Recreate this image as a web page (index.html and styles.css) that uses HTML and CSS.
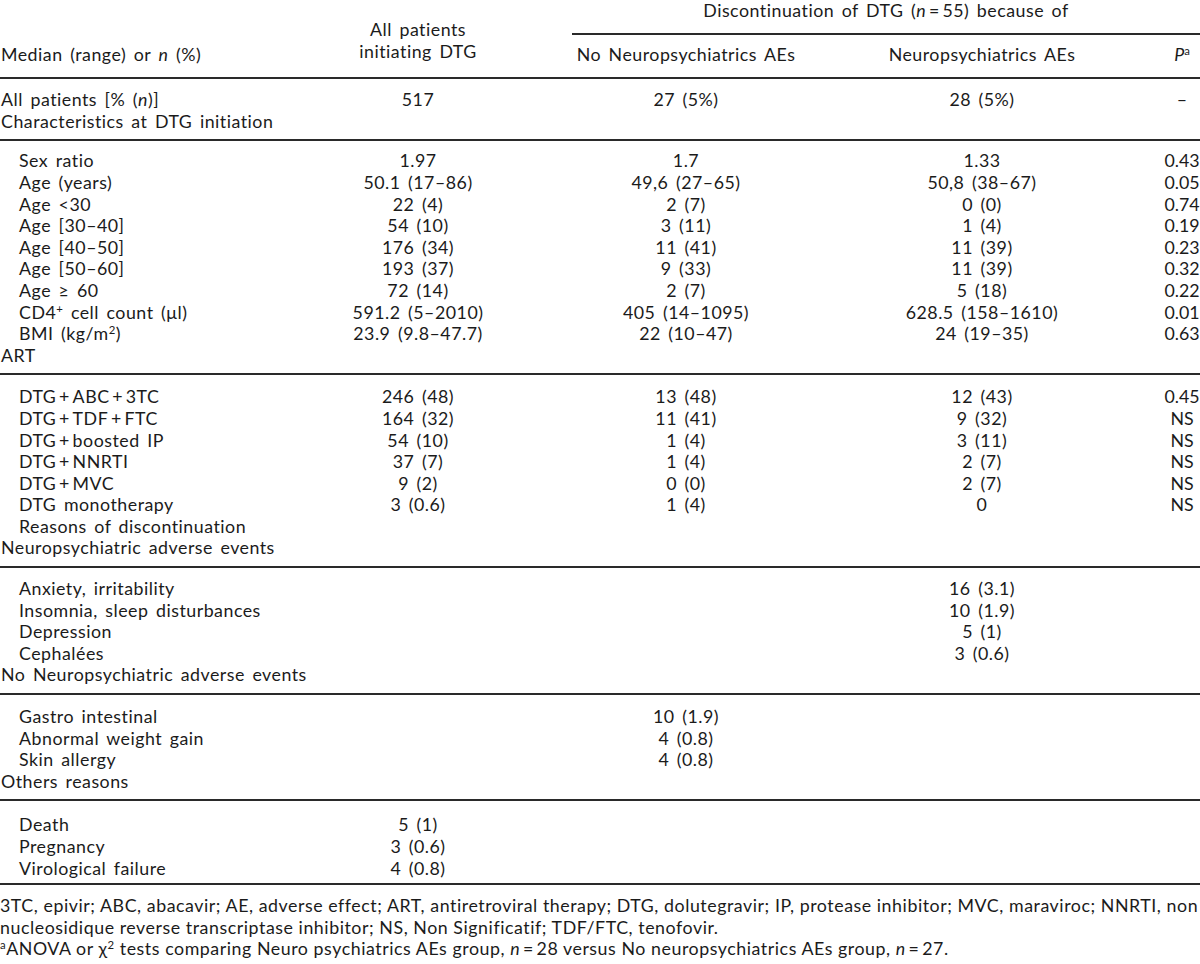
FILE: index.html
```html
<!DOCTYPE html>
<html lang="en">
<head>
<meta charset="utf-8">
<title>Discontinuation of DTG</title>
<link rel="stylesheet" href="styles.css">
</head>
<body>
<table class="t">
  <colgroup>
    <col class="w1"><col class="w2"><col class="w3"><col class="w4"><col class="w5">
  </colgroup>
  <thead>
    <tr>
      <th rowspan="2" class="hl">Median (range) or <i>n</i> (%)</th>
      <th rowspan="2" class="hm">All patients<br>initiating DTG</th>
      <th colspan="3" class="hs">Discontinuation of DTG (<i>n</i>&#8201;=&#8201;55) because of</th>
    </tr>
    <tr>
      <th class="hc">No Neuropsychiatrics AEs</th>
      <th class="hc">Neuropsychiatrics AEs</th>
      <th class="hc pc"><i>P</i><sup>a</sup></th>
    </tr>
  </thead>
  <tbody class="g g1">
    <tr><td>All patients [% (<i>n</i>)]</td><td>517</td><td>27 (5%)</td><td>28 (5%)</td><td>–</td></tr>
    <tr class="sec"><td colspan="5">Characteristics at DTG initiation</td></tr>
  </tbody>
  <tbody class="g g2">
    <tr><td class="in">Sex ratio</td><td>1.97</td><td>1.7</td><td>1.33</td><td>0.43</td></tr>
    <tr><td class="in">Age (years)</td><td>50.1 (17–86)</td><td>49,6 (27–65)</td><td>50,8 (38–67)</td><td>0.05</td></tr>
    <tr><td class="in">Age &lt;30</td><td>22 (4)</td><td>2 (7)</td><td>0 (0)</td><td>0.74</td></tr>
    <tr><td class="in">Age [30–40]</td><td>54 (10)</td><td>3 (11)</td><td>1 (4)</td><td>0.19</td></tr>
    <tr><td class="in">Age [40–50]</td><td>176 (34)</td><td>11 (41)</td><td>11 (39)</td><td>0.23</td></tr>
    <tr><td class="in">Age [50–60]</td><td>193 (37)</td><td>9 (33)</td><td>11 (39)</td><td>0.32</td></tr>
    <tr><td class="in">Age ≥ 60</td><td>72 (14)</td><td>2 (7)</td><td>5 (18)</td><td>0.22</td></tr>
    <tr><td class="in">CD4<sup>+</sup> cell count (μl)</td><td>591.2 (5–2010)</td><td>405 (14–1095)</td><td>628.5 (158–1610)</td><td>0.01</td></tr>
    <tr><td class="in">BMI (kg/m<sup>2</sup>)</td><td>23.9 (9.8–47.7)</td><td>22 (10–47)</td><td>24 (19–35)</td><td>0.63</td></tr>
    <tr class="sec"><td colspan="5">ART</td></tr>
  </tbody>
  <tbody class="g g3">
    <tr><td class="in">DTG&#8201;+&#8201;ABC&#8201;+&#8201;3TC</td><td>246 (48)</td><td>13 (48)</td><td>12 (43)</td><td>0.45</td></tr>
    <tr><td class="in">DTG&#8201;+&#8201;TDF&#8201;+&#8201;FTC</td><td>164 (32)</td><td>11 (41)</td><td>9 (32)</td><td>NS</td></tr>
    <tr><td class="in">DTG&#8201;+&#8201;boosted IP</td><td>54 (10)</td><td>1 (4)</td><td>3 (11)</td><td>NS</td></tr>
    <tr><td class="in">DTG&#8201;+&#8201;NNRTI</td><td>37 (7)</td><td>1 (4)</td><td>2 (7)</td><td>NS</td></tr>
    <tr><td class="in">DTG&#8201;+&#8201;MVC</td><td>9 (2)</td><td>0 (0)</td><td>2 (7)</td><td>NS</td></tr>
    <tr><td class="in">DTG monotherapy</td><td>3 (0.6)</td><td>1 (4)</td><td>0</td><td>NS</td></tr>
    <tr><td class="in" colspan="5">Reasons of discontinuation</td></tr>
    <tr class="sec"><td colspan="5">Neuropsychiatric adverse events</td></tr>
  </tbody>
  <tbody class="g g4">
    <tr><td class="in">Anxiety, irritability</td><td></td><td></td><td>16 (3.1)</td><td></td></tr>
    <tr><td class="in">Insomnia, sleep disturbances</td><td></td><td></td><td>10 (1.9)</td><td></td></tr>
    <tr><td class="in">Depression</td><td></td><td></td><td>5 (1)</td><td></td></tr>
    <tr><td class="in">Cephalées</td><td></td><td></td><td>3 (0.6)</td><td></td></tr>
    <tr class="sec"><td colspan="5">No Neuropsychiatric adverse events</td></tr>
  </tbody>
  <tbody class="g g5">
    <tr><td class="in">Gastro intestinal</td><td></td><td>10 (1.9)</td><td></td><td></td></tr>
    <tr><td class="in">Abnormal weight gain</td><td></td><td>4 (0.8)</td><td></td><td></td></tr>
    <tr><td class="in">Skin allergy</td><td></td><td>4 (0.8)</td><td></td><td></td></tr>
    <tr class="sec"><td colspan="5">Others reasons</td></tr>
  </tbody>
  <tbody class="g g6">
    <tr><td class="in">Death</td><td>5 (1)</td><td></td><td></td><td></td></tr>
    <tr><td class="in">Pregnancy</td><td>3 (0.6)</td><td></td><td></td><td></td></tr>
    <tr><td class="in">Virological failure</td><td>4 (0.8)</td><td></td><td></td><td></td></tr>
  </tbody>
</table>
<div class="notes">
  <p>3TC, epivir; ABC, abacavir; AE, adverse effect; ART, antiretroviral therapy; DTG, dolutegravir; IP, protease inhibitor; MVC, maraviroc; NNRTI, non<br>nucleosidique reverse transcriptase inhibitor; NS, Non Significatif; TDF/FTC, tenofovir.</p>
  <p><sup>a</sup>ANOVA or χ<sup>2</sup> tests comparing Neuro psychiatrics AEs group, <i>n</i>&#8201;=&#8201;28 versus No neuropsychiatrics AEs group, <i>n</i>&#8201;=&#8201;27.</p>
</div>
</body>
</html>
```

FILE: styles.css
```css
html, body {
  margin: 0;
  padding: 0;
  background: #ffffff;
}

body {
  font-family: "Lato", "Open Sans", "DejaVu Sans", sans-serif;
  font-size: 17.8px;
  letter-spacing: 0.5px;
  word-spacing: 2.5px;
  color: #1b1b1b;
  width: 1200px;
}

.t {
  width: 1200px;
  table-layout: fixed;
  border-collapse: separate;
  border-spacing: 0;
}

.w1 { width: 264px; }
.w2 { width: 308px; }
.w3 { width: 228px; }
.w4 { width: 364px; }
.w5 { width: 36px; }

th, td {
  font-weight: normal;
  line-height: 21.6px;
  padding: 0;
  white-space: nowrap;
  text-align: center;
}

/* P column: tighter so values fit the narrow column */
td:last-child,
.pc {
  letter-spacing: 0;
  word-spacing: 0;
}

sup {
  font-size: 0.64em;
  line-height: 0;
  vertical-align: 0.5em;
}

/* header */
.hl {
  text-align: left;
  vertical-align: bottom;
  padding: 0 0 12px 1px;
  border-bottom: 2px solid #2a2a2a;
}

.hm {
  vertical-align: middle;
  padding-top: 4px;
  border-bottom: 2px solid #2a2a2a;
}

.hs {
  padding-bottom: 11px;
  border-bottom: 2px solid #2a2a2a;
}

.hc {
  padding: 9px 0 12px;
  border-bottom: 2px solid #2a2a2a;
}

/* body */
td:first-child {
  text-align: left;
  padding-left: 1px;
  letter-spacing: 0.5px;
  word-spacing: 2.5px;
}

td.in {
  padding-left: 19px;
}

.g tr:first-child td { padding-top: 9px; }
.g1 tr:first-child td { padding-top: 10px; }
.g3 tr:first-child td { padding-top: 11px; }
.g4 tr:first-child td { padding-top: 10px; }
.g5 tr:first-child td { padding-top: 11px; }
.g6 tr:first-child td { padding-top: 13px; }

.sec td {
  padding-bottom: 7px;
  border-bottom: 2px solid #2a2a2a;
}

.g6 tr:last-child td {
  padding-bottom: 4px;
  border-bottom: 2px solid #2a2a2a;
}

/* notes */
.notes {
  padding-top: 10px;
  font-size: 17.8px;
  letter-spacing: 0.55px;
  word-spacing: 0;
  line-height: 21.6px;
}

.notes p {
  margin: 0;
  white-space: nowrap;
}
```
